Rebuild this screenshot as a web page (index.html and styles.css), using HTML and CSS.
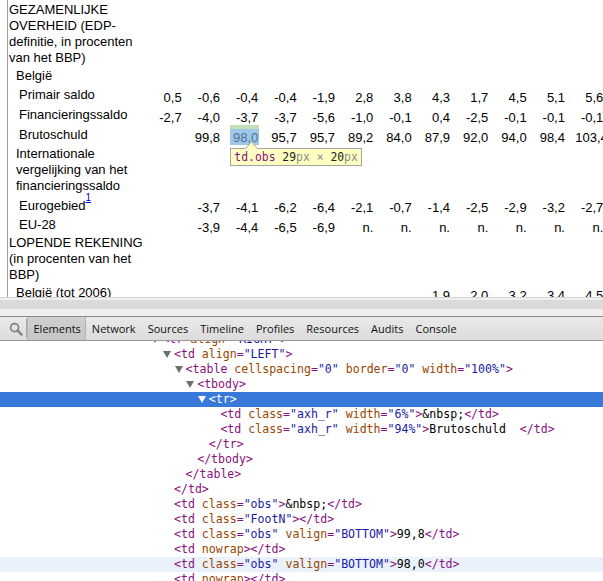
FILE: index.html
```html
<!DOCTYPE html>
<html>
<head>
<meta charset="utf-8">
<link rel="stylesheet" href="styles.css">
</head>
<body>
<div class="viewport">
  <div class="sheet">
    <div class="row head"><div class="lab">GEZAMENLIJKE OVERHEID (EDP-definitie, in procenten van het BBP)</div></div>
    <div class="row r195"><div class="lab i1">België</div></div>
    <div class="row">
      <div class="lab i2">Primair saldo</div>
      <div class="n">0,5</div><div class="n">-0,6</div><div class="n">-0,4</div><div class="n">-0,4</div><div class="n">-1,9</div><div class="n">2,8</div><div class="n">3,8</div><div class="n">4,3</div><div class="n">1,7</div><div class="n">4,5</div><div class="n">5,1</div><div class="n">5,6</div>
    </div>
    <div class="row">
      <div class="lab i2">Financieringssaldo</div>
      <div class="n">-2,7</div><div class="n">-4,0</div><div class="n">-3,7</div><div class="n">-3,7</div><div class="n">-5,6</div><div class="n">-1,0</div><div class="n">-0,1</div><div class="n">0,4</div><div class="n">-2,5</div><div class="n">-0,1</div><div class="n">-0,1</div><div class="n">-0,1</div>
    </div>
    <div class="row">
      <div class="lab i2">Brutoschuld</div>
      <div class="n"></div><div class="n">99,8</div>
      <div class="n hl"><span>98,0</span><div class="tip"><svg class="tip-arrow" width="13" height="8" viewBox="0 0 13 8"><polygon points="0,8 6.5,0.6 13,8" fill="#ffffc2"/><polyline points="0.5,7.6 6.5,0.8 12.5,7.6" fill="none" stroke="#a3a3a3" stroke-width="1"/></svg><span class="t-tag">td.obs</span> <span class="t-num">29</span><span class="t-unit">px</span> <span class="t-unit">×</span> <span class="t-num">20</span><span class="t-unit">px</span></div></div>
      <div class="n">95,7</div><div class="n">95,7</div><div class="n">89,2</div><div class="n">84,0</div><div class="n">87,9</div><div class="n">92,0</div><div class="n">94,0</div><div class="n">98,4</div><div class="n">103,4</div>
    </div>
    <div class="row tall"><div class="lab i1">Internationale vergelijking van het financieringssaldo</div></div>
    <div class="row r19">
      <div class="lab i2">Eurogebied<sup class="fn"><a class="fn-link">1</a></sup></div>
      <div class="n"></div><div class="n">-3,7</div><div class="n">-4,1</div><div class="n">-6,2</div><div class="n">-6,4</div><div class="n">-2,1</div><div class="n">-0,7</div><div class="n">-1,4</div><div class="n">-2,5</div><div class="n">-2,9</div><div class="n">-3,2</div><div class="n">-2,7</div>
    </div>
    <div class="row">
      <div class="lab i2">EU-28</div>
      <div class="n"></div><div class="n">-3,9</div><div class="n">-4,4</div><div class="n">-6,5</div><div class="n">-6,9</div><div class="n">n.</div><div class="n">n.</div><div class="n">n.</div><div class="n">n.</div><div class="n">n.</div><div class="n">n.</div><div class="n">n.</div>
    </div>
    <div class="row head"><div class="lab">LOPENDE REKENING (in procenten van het BBP)</div></div>
    <div class="row">
      <div class="lab i1">België (tot 2006)</div>
      <div class="n"></div><div class="n"></div><div class="n"></div><div class="n"></div><div class="n"></div><div class="n"></div><div class="n"></div><div class="n">1,9</div><div class="n">2,0</div><div class="n">3,2</div><div class="n">3,4</div><div class="n">4,5</div>
    </div>
  </div>
</div>
<div class="hscroll"><div class="thumb"></div></div>
<div class="devtools">
  <div class="toolbar">
    <div class="search"><svg width="14" height="14" viewBox="0 0 14 14"><circle cx="5.6" cy="5.6" r="4" fill="none" stroke="#828282" stroke-width="1.7"/><line x1="8.6" y1="8.6" x2="12.6" y2="12.6" stroke="#828282" stroke-width="2.3" stroke-linecap="round"/></svg></div>
    <div class="sep"></div>
    <div class="tabs">
      <span class="tab sel">Elements</span><span class="tab">Network</span><span class="tab">Sources</span><span class="tab">Timeline</span><span class="tab">Profiles</span><span class="tab">Resources</span><span class="tab">Audits</span><span class="tab">Console</span>
    </div>
  </div>
  <div class="dom">
    <div class="dom-inner">
<div class="ln l0"><span class="tri"><svg width="8" height="7" viewBox="0 0 8 7"><polygon points="0,0 8,0 4,7"/></svg></span><span class="tg">&lt;tr</span> <span class="an">align</span><span class="tg">=</span><span class="av">"RIGHT"</span><span class="tg">&gt;</span></div>
<div class="ln l1"><span class="tri"><svg width="8" height="7" viewBox="0 0 8 7"><polygon points="0,0 8,0 4,7"/></svg></span><span class="tg">&lt;td</span> <span class="an">align</span><span class="tg">=</span><span class="av">"LEFT"</span><span class="tg">&gt;</span></div>
<div class="ln l2"><span class="tri"><svg width="8" height="7" viewBox="0 0 8 7"><polygon points="0,0 8,0 4,7"/></svg></span><span class="tg">&lt;table</span> <span class="an">cellspacing</span><span class="tg">=</span><span class="av">"0"</span> <span class="an">border</span><span class="tg">=</span><span class="av">"0"</span> <span class="an">width</span><span class="tg">=</span><span class="av">"100%"</span><span class="tg">&gt;</span></div>
<div class="ln l3"><span class="tri"><svg width="8" height="7" viewBox="0 0 8 7"><polygon points="0,0 8,0 4,7"/></svg></span><span class="tg">&lt;tbody&gt;</span></div>
<div class="ln l4 sel"><span class="tri"><svg width="8" height="7" viewBox="0 0 8 7"><polygon points="0,0 8,0 4,7"/></svg></span><span class="tg">&lt;tr&gt;</span></div>
<div class="ln l5"><span class="tg">&lt;td</span> <span class="an">class</span><span class="tg">=</span><span class="av">"axh_r"</span> <span class="an">width</span><span class="tg">=</span><span class="av">"6%"</span><span class="tg">&gt;</span>&amp;nbsp;<span class="tg">&lt;/td&gt;</span></div>
<div class="ln l5"><span class="tg">&lt;td</span> <span class="an">class</span><span class="tg">=</span><span class="av">"axh_r"</span> <span class="an">width</span><span class="tg">=</span><span class="av">"94%"</span><span class="tg">&gt;</span>Brutoschuld  <span class="tg">&lt;/td&gt;</span></div>
<div class="ln l4"><span class="tg">&lt;/tr&gt;</span></div>
<div class="ln l3"><span class="tg">&lt;/tbody&gt;</span></div>
<div class="ln l2"><span class="tg">&lt;/table&gt;</span></div>
<div class="ln l1"><span class="tg">&lt;/td&gt;</span></div>
<div class="ln l1"><span class="tg">&lt;td</span> <span class="an">class</span><span class="tg">=</span><span class="av">"obs"</span><span class="tg">&gt;</span>&amp;nbsp;<span class="tg">&lt;/td&gt;</span></div>
<div class="ln l1"><span class="tg">&lt;td</span> <span class="an">class</span><span class="tg">=</span><span class="av">"FootN"</span><span class="tg">&gt;&lt;/td&gt;</span></div>
<div class="ln l1"><span class="tg">&lt;td</span> <span class="an">class</span><span class="tg">=</span><span class="av">"obs"</span> <span class="an">valign</span><span class="tg">=</span><span class="av">"BOTTOM"</span><span class="tg">&gt;</span>99,8<span class="tg">&lt;/td&gt;</span></div>
<div class="ln l1"><span class="tg">&lt;td</span> <span class="an">nowrap</span><span class="tg">&gt;&lt;/td&gt;</span></div>
<div class="ln l1 hov"><span class="tg">&lt;td</span> <span class="an">class</span><span class="tg">=</span><span class="av">"obs"</span> <span class="an">valign</span><span class="tg">=</span><span class="av">"BOTTOM"</span><span class="tg">&gt;</span>98,0<span class="tg">&lt;/td&gt;</span></div>
<div class="ln l1"><span class="tg">&lt;td</span> <span class="an">nowrap</span><span class="tg">&gt;&lt;/td&gt;</span></div>
    </div>
  </div>
</div>
</body>
</html>
```
FILE: styles.css
```css
* { box-sizing: border-box; }
html, body { margin: 0; padding: 0; background: #fff; }
body {
  width: 603px;
  height: 581px;
  overflow: hidden;
  font-family: "Liberation Sans", Arial, sans-serif;
  font-size: 13px;
  color: #000;
}

/* ---------- page area ---------- */
.viewport {
  height: 297px;
  overflow: hidden;
}
.sheet {
  margin-left: 7px;
  border-left: 1px solid #a0a0a0;
  padding-top: 1.5px;
  width: max-content;
  min-height: 297px;
}
.row {
  display: grid;
  grid-template-columns: 145.7px repeat(12, 38.33px);
  height: 20px;
}
.row.r195 { height: 19.5px; }
.row.r19 { height: 19px; }
.row.tall { height: 50.5px; }
.row.head { display: block; height: auto; }
.head .lab {
  width: 139px;
  padding-left: 1px;
  padding-top: 0;
}
.lab {
  display: block;
  line-height: 16px;
  padding-top: 2px;
  white-space: normal;
}
.tall .lab { padding-top: 1.25px; width: 145.7px; }
.lab.i1 { padding-left: 8px; }
.lab.i2 { padding-left: 11px; white-space: nowrap; }
.fn { font-size: 10px; line-height: 0; vertical-align: 9px; }
.fn-link { color: #0000ee; text-decoration: underline; }

.n {
  width: 29px;
  align-self: end;
  text-align: right;
  padding-right: 1px;
  line-height: 14px;
  white-space: nowrap;
}
.n.hl {
  align-self: stretch;
  position: relative;
  display: flex;
  align-items: flex-end;
  justify-content: flex-end;
}
.n.hl::after {
  content: "";
  position: absolute;
  inset: 0;
  background: linear-gradient(rgba(147,196,125,0.55) 0 4px, rgba(111,168,220,0.66) 4px);
}

/* tooltip */
.tip {
  position: absolute;
  left: 0;
  top: 23px;
  z-index: 2;
  height: 18px;
  padding: 0 3px;
  background: #ffffc2;
  border: 1px solid #a3a3a3;
  font-family: "DejaVu Sans Mono", monospace;
  font-size: 11.4px;
  line-height: 16px;
  white-space: nowrap;
  text-align: left;
}
.tip-arrow { position: absolute; left: 14px; top: -8px; display: block; }
.t-tag { color: #881280; }
.t-num { color: #222; }
.t-unit { color: #8a8a8a; }

/* ---------- scroll strip ---------- */
.hscroll {
  height: 19px;
  border-top: 1px solid #d2d2d2;
  background: #efefef;
  padding-top: 2px;
}
.thumb { height: 9px; background: #dadada; }

/* ---------- devtools ---------- */
.devtools { border-top: 1px solid #8a8a8a; }
.toolbar {
  height: 24px;
  display: flex;
  align-items: stretch;
  background: linear-gradient(#e9e9e9, #dcdcdc);
  border-bottom: 1px solid #999;
  font-family: "Open Sans", "Noto Sans", sans-serif;
  font-size: 11px;
}
.search {
  width: 26px;
  padding-left: 9px;
  display: flex;
  align-items: center;
}
.sep {
  width: 1px;
  margin: 2px 0;
  background: #a6a6a6;
}
.tabs { display: flex; }
.tab {
  display: flex;
  align-items: center;
  padding: 0 6px 0 6px;
  color: #111;
}
.tab.sel {
  background: linear-gradient(#cfcfcf, #c6c6c6);
  box-shadow: inset 1px 0 #b4b4b4, inset -1px 0 #b4b4b4;
  padding-left: 6.5px;
  padding-right: 5px;
}

.dom {
  height: 240px;
  overflow: hidden;
  font-family: "DejaVu Sans Mono", monospace;
  font-size: 11.57px;
}
.dom-inner { margin-top: -9px; }
.ln {
  height: 15px;
  line-height: 15px;
  white-space: pre;
  color: #000;
}
.ln.l0 { padding-left: 162.4px; }
.ln.l1 { padding-left: 174px; }
.ln.l2 { padding-left: 185.6px; }
.ln.l3 { padding-left: 197.2px; }
.ln.l4 { padding-left: 208.8px; }
.ln.l5 { padding-left: 220.4px; }
.tri {
  display: inline-block;
  width: 8px;
  margin-left: -11px;
  margin-right: 3px;
}
.tri svg { display: block; fill: #6e6e6e; }
.tg { color: #881280; }
.an { color: #994500; }
.av { color: #1a1aa6; }
.ln.sel { background: #3879d9; }
.ln.sel, .ln.sel span { color: #fff; }
.ln.sel .tri svg { fill: #fff; }
.ln.hov { background: #eaf1fb; }
```
